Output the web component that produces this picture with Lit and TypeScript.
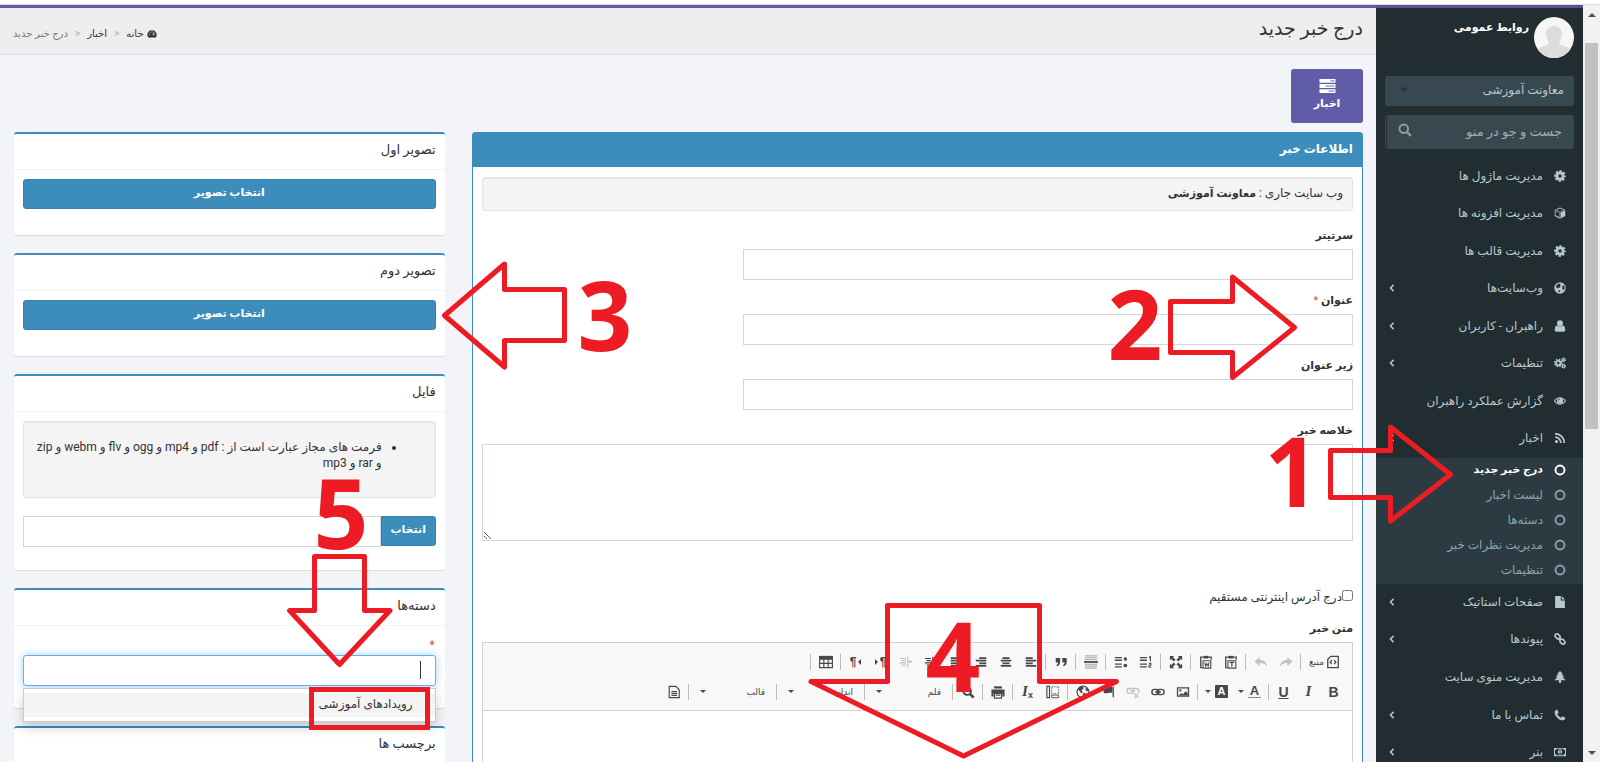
import { LitElement, html, svg, css, TemplateResult } from "lit";
import { customElement, property } from "lit/decorators.js";

const ICONS: Record<string, TemplateResult> = {
  cog: svg`<circle cx="8" cy="8" r="4.100" fill="none" stroke="currentColor" stroke-width="3.600"/><circle cx="8" cy="8" r="6.500" fill="none" stroke="currentColor" stroke-width="2.600" stroke-dasharray="3.100 2.005" stroke-dashoffset="1.550"/>`,
  cube: svg`<path d="M8 .6l7 2.900v8.600l-7 3.400-7-3.400V3.500z"/><path d="M1.800 4.200L8 6.600l6.200-2.400M8 6.600v8" stroke="#222d32" stroke-width="1.200" fill="none"/><path d="M8 1.900l4.600 1.900L8 5.500 3.400 3.800zM2 5.500l5 2v5.800l-5-2.200z" fill="#222d32"/>`,
  globe: svg`<circle cx="8" cy="8" r="7.600"/><path d="M3 4.500L6.500 2l2.500.8-1 2.200 1 1-2 1.800-1.500-.3-1 1-1.500-1.500zM11 5l2.500-.5.8 3.500-1.500 3-1.800-2 .2-1.800zM6 10.500l2.500 1-.8 2-1.700-.5z" fill="#222d32"/>`,
  user: svg`<circle cx="8" cy="4.300" r="4"/><path d="M1 13c0-3.500 1.300-5.800 3.300-5.800 2.100 1.700 5.300 1.700 7.400 0 2 0 3.300 2.300 3.300 5.800 0 1.600-.9 2.600-2.300 2.600H3.300C1.900 15.600 1 14.600 1 13z"/>`,
  cogs: svg`<circle cx="5.700" cy="8" r="2.900" fill="none" stroke="currentColor" stroke-width="2.400"/><circle cx="5.700" cy="8" r="4.800" fill="none" stroke="currentColor" stroke-width="1.900" stroke-dasharray="2.200 1.570"/><circle cx="12.800" cy="3.800" r="1.700" fill="none" stroke="currentColor" stroke-width="1.600"/><circle cx="12.800" cy="3.800" r="2.800" fill="none" stroke="currentColor" stroke-width="1.200" stroke-dasharray="1.400 1.530"/><circle cx="12.800" cy="12.200" r="1.700" fill="none" stroke="currentColor" stroke-width="1.600"/><circle cx="12.800" cy="12.200" r="2.800" fill="none" stroke="currentColor" stroke-width="1.200" stroke-dasharray="1.400 1.530"/>`,
  eye: svg`<path d="M0 8c2-3.300 4.900-5 8-5s6 1.700 8 5c-2 3.300-4.900 5-8 5S2 11.300 0 8z"/><path d="M1.600 8C3 5.900 4.300 4.900 5.600 4.500a4.200 4.200 0 1 0 4.800 0C11.700 4.900 13 5.900 14.400 8c-1.700 2.500-4 3.700-6.400 3.700S3.300 10.500 1.600 8z" fill="#222d32"/><circle cx="8" cy="7.500" r="3.400"/><path d="M6 7.300A2 2 0 0 1 8 5.500" stroke="#222d32" fill="none"/>`,
  rss: svg`<circle cx="3.300" cy="12.700" r="2.100"/><path d="M1.500 6.800a7.700 7.700 0 0 1 7.700 7.700M1.500 2.300a12.200 12.200 0 0 1 12.200 12.200" fill="none" stroke="currentColor" stroke-width="2.400"/>`,
  ring: svg`<circle cx="8" cy="8" r="6" fill="none" stroke="currentColor" stroke-width="2.500"/>`,
  file: svg`<path d="M1.500 0h7.500v6h5.500V16h-13z"/><path d="M10.200 0l4.300 4.700h-4.300z"/>`,
  link: svg`<g fill="none" stroke="currentColor" stroke-width="2.200"><rect x="1" y="2" width="7.500" height="5" rx="2.500" transform="rotate(45 4.800 4.500)"/><rect x="7.500" y="9" width="7.500" height="5" rx="2.500" transform="rotate(45 11.200 11.500)"/><path d="M6.500 6.500l3 3"/></g>`,
  tree: svg`<path d="M8 0l4.200 4.200h-2l3.400 3.700h-2L15.500 12.300H9.500V16h-3v-3.700H.5l3.900-4.400h-2l3.400-3.700h-2z"/>`,
  phone: svg`<path d="M1 3.200C1.300 1.900 3 1 4.300 1l2 3.900-1.900 1.700c1 2.100 2.800 4 5 5l1.800-2 3.900 2.100c0 1.400-1 3-2.300 3.300C7.500 16.300-.4 8.500 1 3.200z"/>`,
  money: svg`<path d="M0 2.500h16v11H0zM1.300 5.800v4.400a2 2 0 0 1 2 2h9.400a2 2 0 0 1 2-2V5.800a2 2 0 0 1-2-2H3.300a2 2 0 0 1-2 2z" fill-rule="evenodd"/><ellipse cx="8" cy="8" rx="2.800" ry="3.600"/><path d="M7 6.500l1.200-.8v4M6.900 10h2.500" stroke="#222d32" fill="none"/>`,
  search: svg`<circle cx="6.600" cy="6.600" r="4.900" fill="none" stroke="currentColor" stroke-width="2.200"/><path d="M10.200 10.200l4.500 4.500" stroke="currentColor" stroke-width="2.700"/>`,
  chevron: svg`<path d="M10.500 3L5.500 8l5 5" fill="none" stroke="currentColor" stroke-width="2.400"/>`,
  caret: svg`<path d="M3 5.500h10L8 10.500z"/>`,
  dash: svg`<path d="M8 2a7.200 7.200 0 0 0-6 11.500h12A7.200 7.200 0 0 0 8 2z"/><path d="M3 9h2M4.500 5l1.200 1.200M8 3.500v2M11.500 5L9 10M11 9h2" stroke="#eee" stroke-width="1.300"/>`,
  server: svg`<path d="M0 1h16v3.800H0zM0 6.100h16v3.800H0zM0 11.200h16V15H0z"/><path d="M11 2.900h4M6 8h9M9 13.100h6" stroke="#605ca8" stroke-width=".9"/>`,
  source: svg`<path d="M5.500 1.500H14v13H2V5z" fill="none" stroke="currentColor" stroke-width="1.500"/><path d="M6.700 6L4.700 8.300l2 2.200M9.300 6l2 2.300-2 2.200" fill="none" stroke="currentColor" stroke-width="1.400"/>`,
  redo: svg`<path d="M9.500 2.500l6 5-6 5V9.300C5.500 9 3 10.500 1 13c.5-4.500 4-7.300 8.500-7.500z"/>`,
  undo: svg`<path d="M6.500 2.500l-6 5 6 5V9.300c4-.3 6.500 1.200 8.500 3.700-.5-4.500-4-7.300-8.500-7.500z"/>`,
  pasteT: svg`<path d="M5 2.500H2v12h2M11 2.500h3v3" fill="none" stroke="currentColor" stroke-width="1.500"/><path d="M5 1h6v3H5z"/><path d="M4.500 6.500h9V15h-9z" fill="none" stroke="currentColor" stroke-width="1.200"/><path d="M6.500 8.500h5M9 8.500v5" stroke="currentColor" stroke-width="1.400"/>`,
  pasteW: svg`<path d="M5 2.500H2v12h2M11 2.500h3v3" fill="none" stroke="currentColor" stroke-width="1.500"/><path d="M5 1h6v3H5z"/><path d="M4.500 6.500h9V15h-9z" fill="none" stroke="currentColor" stroke-width="1.200"/><path d="M6.500 8.500l1 4.300 1.500-3 1.500 3 1-4.300" fill="none" stroke="currentColor" stroke-width="1.200"/>`,
  maximize: svg`<path d="M1 1h5L4.500 2.500l3 3-2 2-3-3L1 6zM15 1v5l-1.500-1.500-3 3-2-2 3-3L10 1zM1 15v-5l1.500 1.500 3-3 2 2-3 3L6 15zM15 15h-5l1.500-1.500-3-3 2-2 3 3L15 10z"/>`,
  numbered: svg`<path d="M1 3h8M1 6h8M1 10.500h8M1 13.500h8" stroke="currentColor" stroke-width="1.500"/><path d="M11.500 3.200L13 2v5M11.500 9.500h2v2.200h-2V14h2.500" stroke="currentColor" stroke-width="1.300" fill="none"/>`,
  bulleted: svg`<path d="M1 3h8M1 6h8M1 10.500h8M1 13.500h8" stroke="currentColor" stroke-width="1.500"/><circle cx="13" cy="4.500" r="2"/><circle cx="13" cy="12" r="2.100"/>`,
  rule: svg`<path d="M1 1h14M1 3.200h14M1 5.400h14M1 10.600h14M1 12.800h14M1 15h14" stroke="#999"/><path d="M0 8h16" stroke="currentColor" stroke-width="2"/>`,
  quote: svg`<path d="M2 3.500h5v4.500c0 2.600-1.300 4.200-3.800 4.800l-.4-1.400c1.200-.5 1.800-1.300 1.800-2.700H2zM9.500 3.500h5v4.500c0 2.600-1.300 4.200-3.800 4.800l-.4-1.400c1.200-.5 1.800-1.300 1.800-2.700H9.500z"/>`,
  alignLeft: svg`<path d="M2 3.500h8M2 6.500h12M2 9.500h8M2 12.500h12" stroke="currentColor" stroke-width="2"/>`,
  alignCenter: svg`<path d="M4 3.500h8M2 6.500h12M4 9.500h8M2 12.500h12" stroke="currentColor" stroke-width="2"/>`,
  alignRight: svg`<path d="M6 3.500h8M2 6.500h12M6 9.500h8M2 12.500h12" stroke="currentColor" stroke-width="2"/>`,
  justify: svg`<path d="M2 3.500h12M2 6.500h12M2 9.500h12M2 12.500h12" stroke="currentColor" stroke-width="2"/>`,
  indent: svg`<path d="M1 4h7M3 6.500h5M1 9h7M3 11.500h5M10 2v12M10 7.500h5M12.800 5.800v3.400" stroke="currentColor" stroke-width="1.400"/>`,
  table: svg`<path d="M0 1h16v4.500H0z"/><path d="M.7 5v9.500h14.600V5M.7 9.500h14.600M5.500 5v9.500M10.500 5v9.500" fill="none" stroke="currentColor" stroke-width="1.300"/>`,
  image: svg`<path d="M1 2.500h14v11H1zM2.500 4v8h11V4z" fill-rule="evenodd"/><circle cx="5" cy="6.200" r="1.300"/><path d="M3 12l3-3 2 1.500L11 7l2.500 2.500V12z"/>`,
  chain: svg`<g fill="none" stroke="currentColor" stroke-width="1.600"><rect x="1" y="5" width="8" height="6" rx="3"/><rect x="7" y="5" width="8" height="6" rx="3"/></g><path d="M4.500 8h7" stroke="currentColor" stroke-width="1.600"/>`,
  unchain: svg`<g fill="none" stroke="currentColor" stroke-width="1.500"><rect x="1" y="4" width="8" height="5.500" rx="2.700"/><path d="M8 4h4a2.700 2.700 0 0 1 2 4.500M4.500 6.800h5M9.500 10l4.500 4.500M14 10l-4.500 4.500"/></g>`,
  flag: svg`<path d="M14 2v12" stroke="currentColor" stroke-width="1.500"/><path d="M13 2.500c-3-1-4 1-7 .5L3 2v7c4 1.500 6-1 10 0z"/>`,
  world: svg`<circle cx="8" cy="8" r="6.800" fill="none" stroke="currentColor" stroke-width="1.300"/><path d="M2 4.500L6 1.500l3 1-1 2.500-2 .8 1.500 2-1 2.200-2-2.500zM11 2.500l3.500 3-1 2-2.500-1.500zM8.500 8.500l2.500 1.200-1.500 3.800-1.500-2z"/>`,
  div: svg`<path d="M1 1.500h3v13H1z" fill="none" stroke="currentColor" stroke-width="1.300"/><path d="M6.500 2h8v8h-8z" fill="none" stroke="currentColor" stroke-dasharray="1.500 1.200"/><path d="M6.500 11.500h8v3h-8z" fill="none" stroke="currentColor"/>`,
  print: svg`<path d="M3.500 1.500h9V4h-9z"/><path d="M.5 5h15v8h-2.500V9H3v4H.5z"/><path d="M4 9.500h8V15H4zM5.500 11.500h5" fill="none" stroke="currentColor" stroke-width="1.400"/>`,
  find: svg`<circle cx="7" cy="7" r="4.300" fill="none" stroke="currentColor" stroke-width="2.200"/><path d="M10 10l4.500 4.500" stroke="currentColor" stroke-width="3"/>`,
  doc: svg`<path d="M2.500 1.500h7.500l4 4v9H2.500z" fill="none" stroke="currentColor" stroke-width="1.300"/><path d="M5 7.500h6.500M5 9.700h6.500M5 11.900h6.500" stroke="currentColor" stroke-width="1.300"/>`,
};

const icon = (name: string, size = "") =>
  html`<svg class="ico ${size}" viewBox="0 0 16 16" aria-hidden="true">${ICONS[name]}</svg>`;

const shared = css`
  :host, *, *::before, *::after { box-sizing: border-box; }
  .ico { width: 16px; height: 16px; fill: currentColor; display: block; flex: none; }
  .ico.xs { width: 10px; height: 10px; }
  .ico.s { width: 12px; height: 12px; }
  .ico.m { width: 14px; height: 14px; }
  .ico.l { width: 19px; height: 16px; }
  button, input, select, textarea { font: inherit; color: inherit; margin: 0; }
  button { cursor: pointer; }
  a { color: inherit; text-decoration: none; }
  ul, ol { margin: 0; padding: 0; list-style: none; }
`;

interface MenuItem { icon: string; label: string; more?: boolean; }

const TOP_MENU: MenuItem[] = [
  { icon: "cog", label: "مدیریت ماژول ها" },
  { icon: "cube", label: "مدیریت افزونه ها" },
  { icon: "cog", label: "مدیریت قالب ها" },
  { icon: "globe", label: "وب‌سایت‌ها", more: true },
  { icon: "user", label: "راهبران - کاربران", more: true },
  { icon: "cogs", label: "تنظیمات", more: true },
  { icon: "eye", label: "گزارش عملکرد راهبران" },
  { icon: "rss", label: "اخبار", more: true },
];
const SUB_MENU = ["درج خبر جدید", "لیست اخبار", "دسته‌ها", "مدیریت نظرات خبر", "تنظیمات"];
const BOTTOM_MENU: MenuItem[] = [
  { icon: "file", label: "صفحات استاتیک", more: true },
  { icon: "link", label: "پیوندها", more: true },
  { icon: "tree", label: "مدیریت منوی سایت" },
  { icon: "phone", label: "تماس با ما", more: true },
  { icon: "money", label: "بنر", more: true },
];

@customElement("side-nav")
export class SideNav extends LitElement {
  static styles = [shared, css`
    :host { display: block; width: 207px; flex: none; background: #222d32; color: #b8c7ce; overflow: hidden; border-top: 3px solid #555299; }
    .user { display: flex; align-items: flex-start; gap: 5px; padding: 9px 9px 0; }
    .avatar { width: 40px; height: 41px; border-radius: 50%; display: block; }
    .name { color: #fff; font-size: 11px; font-weight: bold; line-height: 22px; }
    .tools { display: grid; gap: 9px; padding: 18px 9px 9px; }
    .pick { position: relative; display: block; }
    .pick select { appearance: none; width: 100%; height: 30px; border: 0; border-radius: 3px; background: #374850; color: #b8c7ce; padding: 0 10px 3px; }
    .pick .ico { position: absolute; left: 12px; top: 7px; color: #333; }
    .find { display: flex; height: 34px; border-radius: 3px; background: #374850; overflow: hidden; }
    .find input { flex: 1; min-width: 0; border: 0; background: none; padding: 0 12px; outline: 0; font-size: 13px; }
    .find input::placeholder { color: #aaa; opacity: 1; }
    .find button { width: 36px; border: 0; border-left: 1px solid #222d32; margin-left: 1px; background: none; color: #999; padding: 0 9px 4px; display: flex; align-items: center; justify-content: center; }
    .menu { display: grid; grid-auto-rows: 1fr; }
    .menu.top { min-height: 300px; }
    .menu.bottom { min-height: 188px; }
    .item { display: flex; align-items: center; gap: 11px; padding: 0 17px 2px 11px; height: 100%; }
    .item .text { flex: 1; }
    .glyph { width: 12px; display: flex; justify-content: center; }
    .sub { background: #2c3b41; padding-top: 1px; color: #8aa4af; }
    .sub a { display: flex; align-items: center; gap: 11px; height: 25px; padding: 0 17px 3px; }
    .sub .on { color: #fff; font-size: 11px; font-weight: bold; }
  `];
  private row(i: MenuItem) {
    return html`<li><a class="item" href="#"><span class="glyph">${icon(i.icon, "s")}</span><span class="text">${i.label}</span>${i.more ? icon("chevron", "xs") : ""}</a></li>`;
  }
  render() {
    return html`
      <div class="user">
        <svg class="avatar" viewBox="0 0 40 41" aria-hidden="true">
          <rect width="40" height="41" fill="#f6f6f6"/>
          <path d="M20 9c5 0 8 3 8 8 0 4-2 6-3 9 0 3 10 3 13 8v7H2v-7c3-5 13-5 13-8-1-3-3-5-3-9 0-5 3-8 8-8z" fill="#dcdcdc"/>
        </svg>
        <span class="name">روابط عمومی</span>
      </div>
      <div class="tools">
        <label class="pick"><select aria-label="وب سایت"><option>معاونت آموزشی</option></select>${icon("caret", "m")}</label>
        <form class="find" role="search"><input type="text" aria-label="جست و جو در منو" placeholder="جست و جو در منو" /><button type="button" aria-label="جست و جو">${icon("search", "m")}</button></form>
      </div>
      <nav>
        <ul class="menu top">${TOP_MENU.map((i) => this.row(i))}</ul>
        <ul class="sub">${SUB_MENU.map((t, n) => html`<li><a class=${n === 0 ? "on" : ""} href="#"><span class="glyph">${icon("ring", "s")}</span>${t}</a></li>`)}</ul>
        <ul class="menu bottom">${BOTTOM_MENU.map((i) => this.row(i))}</ul>
      </nav>`;
  }
}

@customElement("side-card")
export class SideCard extends LitElement {
  @property() heading = "";
  static styles = [shared, css`
    :host { display: block; background: #fff; border-top: 2px solid #3c8dbc; border-radius: 3px; box-shadow: 0 1px 1px rgba(0, 0, 0, 0.1); }
    h2 { margin: 0; height: 36px; border-bottom: 1px solid #f4f4f4; padding: 0 9px; font-size: 13px; font-weight: normal; line-height: 32px; color: #333; }
    .body { padding: 9px 9px 0; }
  `];
  render() { return html`<h2>${this.heading}</h2><div class="body"><slot></slot></div>`; }
}

type Tool = string | { kind: "sep" | "combo" | "text" | "para" | "color" | "source"; label?: string; cls?: string; off?: boolean; icon?: string };
const SEP: Tool = { kind: "sep" };
const ROW_ONE: Tool[] = [
  { kind: "source", label: "منبع" }, SEP,
  { kind: "text", icon: "redo", off: true }, { kind: "text", icon: "undo", off: true }, SEP,
  "pasteT", "pasteW", SEP, "maximize", SEP, "numbered", "bulleted", SEP, "rule", SEP, "quote", SEP,
  "alignLeft", "alignCenter", "alignRight", "justify", "indent",
  { kind: "text", icon: "indent", off: true },
  { kind: "para", cls: "ahead" }, { kind: "para", cls: "behind" }, SEP, "table", SEP,
];
const ROW_TWO: Tool[] = [
  { kind: "text", label: "B", cls: "bold" }, { kind: "text", label: "I", cls: "ital" }, { kind: "text", label: "U", cls: "under" }, SEP,
  { kind: "color", label: "A", cls: "fore" }, { kind: "color", label: "A", cls: "back" }, SEP,
  "image", "chain", { kind: "text", icon: "unchain", off: true }, "flag", "world", SEP,
  "div", { kind: "text", cls: "clear" }, SEP, "print", SEP, "find", SEP,
  { kind: "combo", label: "قلم" }, SEP, { kind: "combo", label: "اندازه" }, SEP, { kind: "combo", label: "قالب" }, SEP, "doc",
];

@customElement("rich-editor")
export class RichEditor extends LitElement {
  static styles = [shared, css`
    :host { display: block; border: 1px solid #d1d1d1; background: #fff; color: #474747; }
    .bar { background: #f8f8f8; border-bottom: 1px solid #d1d1d1; padding: 6px; display: grid; gap: 5px; }
    .row { display: flex; flex-wrap: wrap; align-items: center; }
    button { border: 0; background: none; padding: 0; height: 25px; width: 25px; display: flex; align-items: center; justify-content: center; font-family: "Liberation Sans", "DejaVu Sans", sans-serif; font-size: 14px; line-height: 16px; }
    .off { opacity: 0.3; }
    .sep { width: 1px; height: 16px; background: #bcbcbc; margin: 0 2px; }
    .source { width: 43px; gap: 2px; font-size: 9px; }
    .bold { font-weight: bold; }
    .ital { font: italic bold 15px "Liberation Serif", serif; }
    .under { font-weight: bold; text-decoration: underline; }
    .clear { font: italic bold 15px "Liberation Serif", serif; }
    .clear small { font: bold 9px "Liberation Sans", sans-serif; padding-top: 6px; }
    .para { font-weight: bold; direction: ltr; font-size: 12px; gap: 2px; }
    .wide { width: 33px; gap: 4px; }
    .wide span { width: 13px; height: 13px; line-height: 12px; font-size: 13px; font-weight: bold; }
    .fore span { border-bottom: 1px solid #888; }
    .back span { background: #474747; color: #fff; border-radius: 1px; font-size: 11px; }
    .arrow { width: 0; height: 0; border: 3px solid transparent; border-top-color: #474747; border-bottom: 0; }
    .point { width: 0; height: 0; border: 3px solid transparent; }
    .point.east { border-left-color: #474747; border-right: 0; }
    .point.west { border-right-color: #474747; border-left: 0; }
    .combo { width: 83px; padding: 0 9px; font-size: 9px; justify-content: space-between; }
    .area { min-height: 200px; outline: 0; }
  `];
  private tool(t: Tool) {
    if (typeof t === "string") return html`<button type="button" aria-label=${t}>${icon(t, "m")}</button>`;
    if (t.kind === "sep") return html`<span class="sep"></span>`;
    if (t.kind === "source") return html`<button type="button" class="source">${icon("source", "m")}${t.label}</button>`;
    if (t.kind === "combo") return html`<button type="button" class="combo"><span>${t.label}</span><i class="arrow"></i></button>`;
    if (t.kind === "color") return html`<button type="button" class="wide ${t.cls}"><span>${t.label}</span><i class="arrow"></i></button>`;
    if (t.kind === "para")
      return t.cls === "ahead"
        ? html`<button type="button" class="para"><i class="point east"></i>¶</button>`
        : html`<button type="button" class="para">¶<i class="point west"></i></button>`;
    if (t.icon) return html`<button type="button" aria-label=${t.icon} class=${t.off ? "off" : ""}>${icon(t.icon, "m")}</button>`;
    if (t.cls === "clear") return html`<button type="button" class="clear" dir="ltr">I<small>x</small></button>`;
    return html`<button type="button" class=${t.cls ?? ""}>${t.label}</button>`;
  }
  render() {
    return html`
      <div class="bar">
        <div class="row">${ROW_ONE.map((t) => this.tool(t))}</div>
        <div class="row">${ROW_TWO.map((t) => this.tool(t))}</div>
      </div>
      <div class="area" role="textbox" aria-label="متن خبر" contenteditable="true"></div>`;
  }
}

@customElement("app-root")
export class AppRoot extends LitElement {
  static styles = [shared, css`
    :host { display: flex; flex-direction: column; position: relative; height: 100vh; padding: 4px 0 18px; overflow: hidden; background: #fff; direction: rtl; font-family: Roboto, "DejaVu Sans", sans-serif; font-size: 12px; line-height: 20px; color: #333; }
    .frame { flex: 1; min-height: 0; display: flex; border-top: 1px solid #dcdcdc; }
    .scroll { width: 17px; flex: none; background: #f1f1f1; display: flex; flex-direction: column; align-items: center; padding: 8px 0 7px; }
    .scroll .thumb { width: 13px; flex: 0 0 52%; margin-top: 26px; background: #c1c1c1; }
    .scroll .rest { flex: 1; }
    .up, .down { width: 0; height: 0; border: 4px solid transparent; }
    .up { border-bottom-color: #505050; border-top: 0; }
    .down { border-top-color: #505050; border-bottom: 0; }
    main { flex: 1; min-width: 0; overflow: hidden; background: #f3f4f7; border-top: 3px solid #605ca8; }
    .head { display: flex; justify-content: space-between; height: 47px; padding: 0 13px; background: #eee; border-bottom: 1px solid #d8dbe0; }
    h1 { margin: 0; font-size: 19px; font-weight: normal; line-height: 42px; }
    .crumbs { display: flex; align-items: center; gap: 7px; font-size: 10px; padding-top: 5px; color: #777; }
    .crumbs a { display: flex; align-items: center; gap: 3px; color: #333; }
    .crumbs .gt { color: #aaa; direction: ltr; unicode-bidi: isolate-override; }
    .actions { padding: 14px 13px 9px; display: flex; }
    .action { width: 72px; height: 54px; border-radius: 3px; background: #605ca8; color: #fff; display: flex; flex-direction: column; align-items: center; padding-top: 9px; font-size: 11px; font-weight: bold; }
    .cols { display: flex; align-items: flex-start; }
    .wide { width: 66.6667%; padding: 0 13px; }
    .narrow { width: 33.3333%; padding: 0 14px; display: grid; gap: 18px; }
    .panel { border: 1px solid #3c8dbc; border-radius: 3px 3px 0 0; background: #fff; }
    .panel h2 { margin: 0; height: 34px; padding: 0 9px; background: #3c8dbc; color: #fff; font-size: 12px; line-height: 32px; }
    .panel .body { padding: 10px 9px; }
    .well { background: #f4f4f4; border: 1px solid #e3e3e3; border-radius: 3px; box-shadow: inset 0 1px 1px rgba(0, 0, 0, 0.05); }
    .site { height: 34px; padding: 0 9px; line-height: 31px; margin-bottom: 15px; }
    .site b { font-size: 11px; }
    .field { display: grid; gap: 3px; margin-bottom: 11px; }
    .field label, .label { font-size: 11px; font-weight: bold; line-height: 20px; }
    .text, textarea { border: 1px solid #d2d6de; background: #fff; border-radius: 0; padding: 5px 10px; outline: 0; display: block; }
    .text { height: 31px; }
    .field .text { width: 70%; }
    textarea { width: 100%; height: 97px; }
    .field.tall { margin-bottom: 46px; }
    .req { color: #dd4b39; font-weight: normal; }
    .check { display: flex; align-items: flex-start; margin: 0 0 12px; }
    .check input { width: 11px; height: 11px; margin: 3px 0 0; }
    .label { margin-bottom: 3px; }
    .primary { background: #3c8dbc; border: 1px solid #367fa9; border-radius: 3px; color: #fff; font-size: 11px; font-weight: bold; height: 30px; padding: 0 9px 3px; }
    .primary.full { width: 100%; display: block; margin-bottom: 26px; }
    .formats { padding: 17px 19px 17px 8px; min-height: 77px; line-height: 16px; margin-bottom: 18px; }
    .formats ul { list-style: disc; padding-right: 34px; }
    .upload { display: flex; margin-bottom: 23px; }
    .upload .text { flex: 1; min-width: 0; }
    .upload .primary { border-radius: 0 3px 3px 0; width: 55px; padding: 0 0 3px; }
    .tags { padding: 0 1px; line-height: 20px; height: 20px; }
    .token { position: relative; margin-bottom: 22px; }
    .token input { width: 100%; height: 31px; border: 1px solid #66afe9; border-radius: 3px; background: #fff; outline: 0; padding: 0 14px; box-shadow: 0 0 8px rgba(102, 175, 233, 0.6); display: block; }
    .cursor { position: absolute; right: 15px; top: 6px; width: 1px; height: 18px; background: #333; }
    .drop { position: absolute; z-index: 2; top: 33px; left: 0; right: 0; padding: 4px 0; background: #fff; border: 1px solid #ccc; box-shadow: 0 6px 12px rgba(0, 0, 0, 0.18); }
    .drop a { display: block; height: 24px; line-height: 22px; padding: 0 22px; background: #f4f4f4; }
    .rest { min-height: 60px; }
    .marks { position: absolute; z-index: 5; left: 0; top: 0; width: 1600px; height: 780px; pointer-events: none; direction: ltr; fill: none; stroke: #ed1c24; stroke-width: 5px; stroke-linejoin: round; }
    .marks text { fill: #ed1c24; stroke: none; font: bold 96px "Open Sans", sans-serif; text-anchor: middle; }
  `];
  render() {
    return html`
      <div class="frame">
        <div class="scroll" aria-hidden="true"><i class="up"></i><i class="thumb"></i><i class="rest"></i><i class="down"></i></div>
        <side-nav></side-nav>
        <main>
          <header class="head">
            <h1>درج خبر جدید</h1>
            <nav class="crumbs">
              <a href="#">${icon("dash", "xs")}خانه</a><span class="gt">&gt;</span>
              <a href="#">اخبار</a><span class="gt">&gt;</span><span>درج خبر جدید</span>
            </nav>
          </header>
          <div class="actions"><a class="action" href="#">${icon("server", "l")}اخبار</a></div>
          <div class="cols">
            <div class="wide">
              <section class="panel">
                <h2>اطلاعات خبر</h2>
                <div class="body">
                  <div class="well site">وب سایت جاری : <b>معاونت آموزشی</b></div>
                  <div class="field"><label for="over">سرتیتر</label><input class="text" id="over" type="text" /></div>
                  <div class="field"><label for="title">عنوان <span class="req">*</span></label><input class="text" id="title" type="text" /></div>
                  <div class="field"><label for="under">زیر عنوان</label><input class="text" id="under" type="text" /></div>
                  <div class="field tall"><label for="brief">خلاصه خبر</label><textarea id="brief"></textarea></div>
                  <label class="check"><input type="checkbox" />درج آدرس اینترنتی مستقیم</label>
                  <div class="label">متن خبر</div>
                  <rich-editor></rich-editor>
                </div>
              </section>
            </div>
            <aside class="narrow">
              <side-card heading="تصویر اول"><button class="primary full" type="button">انتخاب تصویر</button></side-card>
              <side-card heading="تصویر دوم"><button class="primary full" type="button">انتخاب تصویر</button></side-card>
              <side-card heading="فایل">
                <div class="well formats"><ul><li>فرمت های مجاز عبارت است از : pdf و mp4 و ogg و flv و webm و zip و rar و mp3</li></ul></div>
                <div class="upload"><button class="primary" type="button">انتخاب</button><input class="text" type="text" aria-label="فایل" /></div>
              </side-card>
              <side-card heading="دسته‌ها">
                <div class="tags req">*</div>
                <div class="token"><input type="text" aria-label="دسته‌ها" /><i class="cursor"></i>
                  <div class="drop"><a href="#">رویدادهای آموزشی</a></div>
                </div>
              </side-card>
              <side-card heading="برچسب ها"><div class="rest"></div></side-card>
            </aside>
          </div>
        </main>
      </div>
      <svg class="marks" viewBox="0 0 1600 780">
        <path d="M1330.500 450.500h60V427l60 47.500-60 46.500v-23.500h-60z"/>
        <path d="M1170.500 301.500h62V277l62 50.500-62 50v-25h-62z"/>
        <path d="M564.500 289.500h-60V264l-60 51.500 60 51.500v-26.500h60z"/>
        <path d="M887.500 605.500h152v76h77L963.500 756 811 681.500h76.500z"/>
        <path d="M314.500 556.500h50v54h25.500l-50.500 54-50-54h25z"/>
        <path d="M311.500 689.500h116v38h-116z" stroke-linejoin="miter"/>
        <text x="1292" y="507">1</text>
        <text x="1135" y="360">2</text>
        <text x="605" y="351">3</text>
        <text x="953" y="692">4</text>
        <text x="341" y="549">5</text>
      </svg>`;
  }
}
